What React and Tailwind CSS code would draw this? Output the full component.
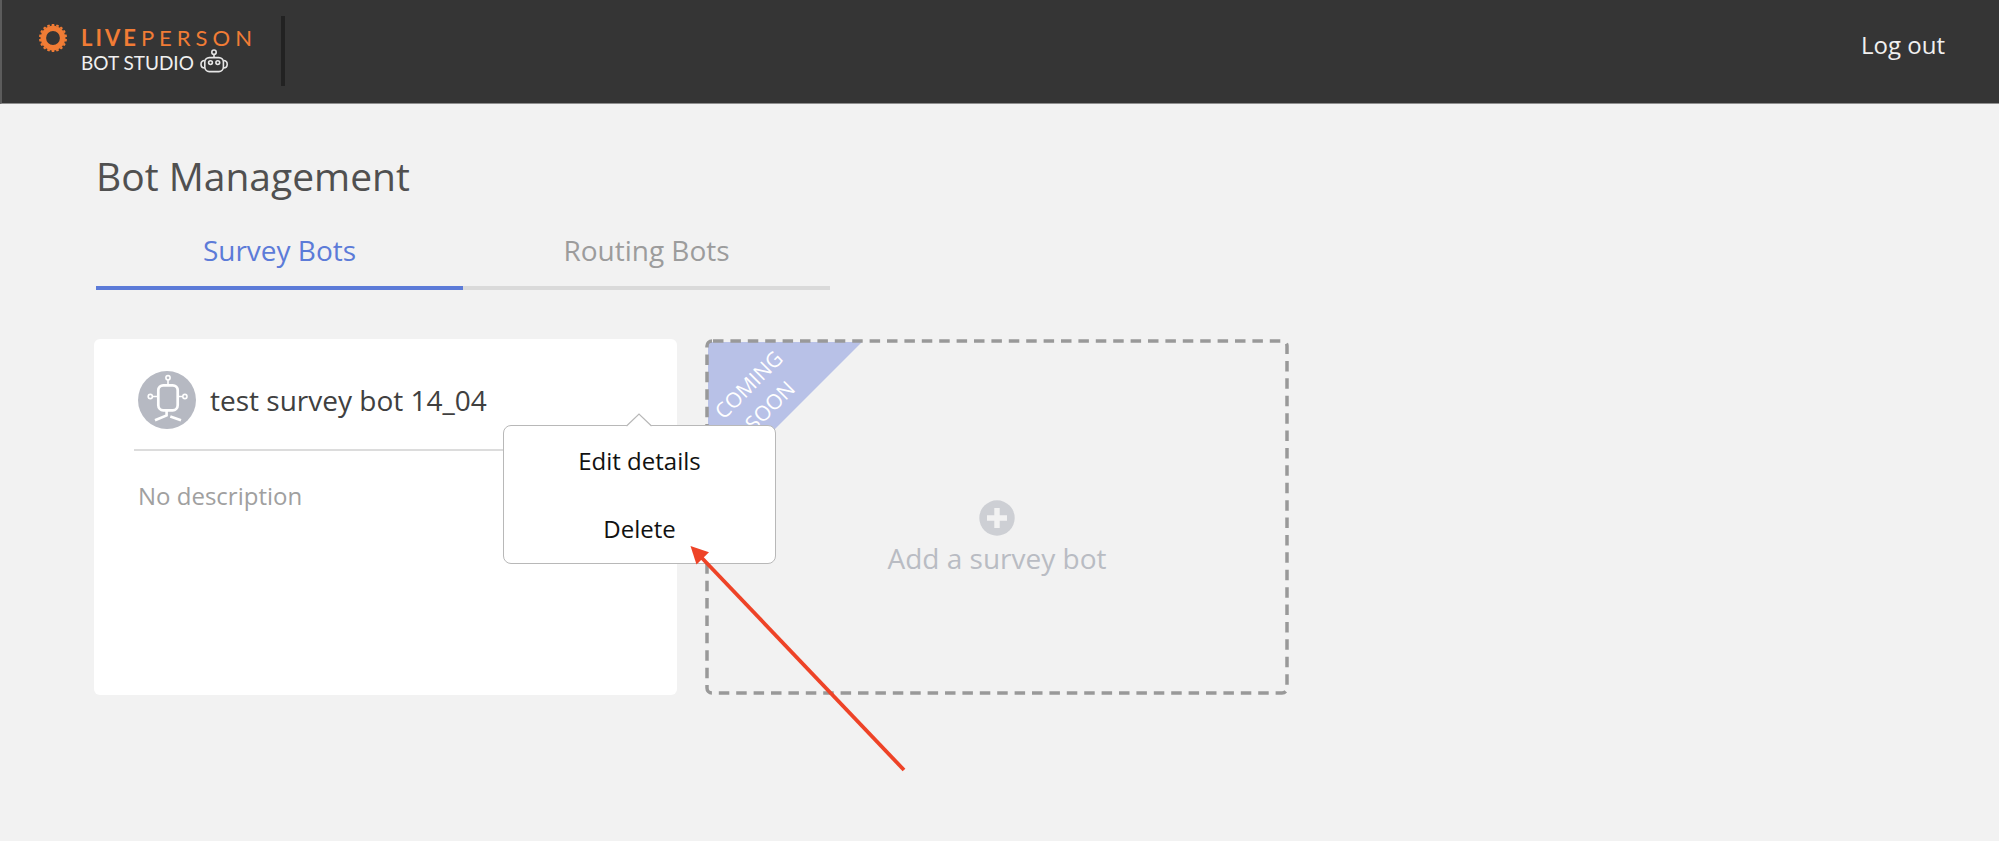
import React from "react";

function GearIcon() {
  const teeth = Array.from({ length: 18 }, (_, i) => i * 20);
  return (
    <svg viewBox="-14 -14 28 28" className="size-7" aria-hidden="true">
      <circle r="9.6" fill="none" stroke="#f17c35" strokeWidth="5.4" />
      {teeth.map((angle) => (
        <path
          key={angle}
          d="M-1.5 -12L-1.2 -14H1.2L1.5 -12Z"
          fill="#f17c35"
          transform={`rotate(${angle})`}
        />
      ))}
    </svg>
  );
}

function RobotHeadIcon() {
  return (
    <svg viewBox="0 0 28 24" className="h-6 w-7" fill="none" stroke="#e6e6e6" strokeWidth="1.6" aria-hidden="true">
      <circle cx="14" cy="3.2" r="2.2" />
      <path d="M14 5.4V8.6" />
      <rect x="4.8" y="8.6" width="18.6" height="14" rx="4.5" />
      <circle cx="10.5" cy="13.6" r="1.9" />
      <circle cx="17.8" cy="13.6" r="1.9" />
      <path d="M4.8 11.5C2.6 11.5 1 13 1 15.2S2.6 18.9 4.8 18.9M23.4 11.5C25.6 11.5 27.2 13 27.2 15.2S25.6 18.9 23.4 18.9" />
    </svg>
  );
}

function BotAvatar() {
  return (
    <svg viewBox="0 0 58 58" className="size-[58px] shrink-0" fill="none" stroke="#fff" aria-hidden="true">
      <circle cx="29" cy="29" r="29" fill="#b6b9c2" stroke="none" />
      <circle cx="30" cy="6.7" r="2.1" strokeWidth="1.6" />
      <path d="M30 8.8V14" strokeWidth="1.6" />
      <rect x="20.3" y="14.3" width="19.4" height="25" rx="5" strokeWidth="2.7" />
      <circle cx="12.3" cy="25.5" r="2.1" strokeWidth="1.6" />
      <circle cx="46.9" cy="25.5" r="2.1" strokeWidth="1.6" />
      <path d="M14.4 25.5H19M41 25.5H44.8" strokeWidth="1.6" />
      <path d="M28.6 40V44.5L17 49.3M32.3 45.5L43 49.3" strokeWidth="2.6" />
    </svg>
  );
}

function PlusIcon() {
  return (
    <svg viewBox="0 0 36 36" className="size-9" aria-hidden="true">
      <circle cx="18" cy="18" r="17.7" fill="#cdcfd4" />
      <path d="M15.3 8H20.7V15.3H28V20.7H20.7V28H15.3V20.7H8V15.3H15.3Z" fill="#f2f2f2" />
    </svg>
  );
}

function Header() {
  return (
    <header className="flex h-[104px] items-start justify-between border-b border-l-2 border-b-[#8f8f8f] border-l-[#5c5c5c] bg-[#353535]">
      <div className="mt-4 flex h-[70px] border-r-4 border-[#222] pl-[37px] pr-6">
        <div className="mt-2">
          <GearIcon />
        </div>
        <div className="ml-3.5 mt-3 font-['Lato',sans-serif]">
          <div className="text-[22px] leading-5 text-[#f17c35]">
            <span className="font-bold tracking-[3px]">LIVE</span>
            <span className="ml-0.5 tracking-[5px]">PERSON</span>
          </div>
          <div className="mt-px flex items-start gap-1.5">
            <span className="pt-1 text-[19px] leading-5 text-[#f0f0f0]">BOT STUDIO</span>
            <RobotHeadIcon />
          </div>
        </div>
      </div>
      <a href="#logout" className="mr-[54px] mt-[27px] text-2xl leading-9 text-[#f0f0f0]">
        Log out
      </a>
    </header>
  );
}

function ActionMenu() {
  return (
    <div className="absolute left-[409px] top-[86px] z-10 w-[273px]" role="menu">
      <div className="flex flex-col rounded-lg border border-[#b8b8b8] bg-white pt-px">
        <button type="button" role="menuitem" className="h-[68px] text-2xl text-[#111]">
          Edit details
        </button>
        <button type="button" role="menuitem" className="h-[68px] text-2xl text-[#111]">
          Delete
        </button>
      </div>
      <svg viewBox="0 0 26 15" className="absolute -top-3 left-[123px] h-[15px] w-[26px]" aria-hidden="true">
        <path d="M0.5 13L13 1L25.5 13V15H0.5Z" fill="#fff" />
        <path d="M0.5 13L13 1L25.5 13" fill="none" stroke="#b8b8b8" strokeWidth="1.2" />
      </svg>
      <svg viewBox="0 0 220 230" className="pointer-events-none absolute left-[186px] top-[119px] h-[230px] w-[220px]" aria-hidden="true">
        <path d="M12 13L215 226" stroke="#ee4327" strokeWidth="3.8" />
        <path d="M1.5 2L20 8.3L7.5 20.5Z" fill="#ee4327" />
      </svg>
    </div>
  );
}

function BotCard() {
  return (
    <article className="relative h-[356px] w-[583px] rounded-md bg-white">
      <div className="mx-10 flex h-[112px] items-center gap-3.5 border-b-2 border-[#dcdcdc] pl-1 pt-3">
        <BotAvatar />
        <h2 className="text-[28px] leading-9 text-[#404040]">test survey bot 14_04</h2>
      </div>
      <p className="ml-11 mt-[27px] text-2xl leading-9 text-[#a0a0a0]">No description</p>
      <ActionMenu />
    </article>
  );
}

function AddBotCard() {
  return (
    <div className="relative h-[356px] w-[584px]">
      <svg className="absolute inset-0 size-full" aria-hidden="true">
        <path d="M3 3H157L3 157Z" fill="#b8c1e7" />
        <rect x="2" y="2" width="580" height="352" rx="5" fill="none" stroke="#999" strokeWidth="3.5" strokeDasharray="10.5 6.9" strokeDashoffset="-1" />
      </svg>
      <div className="absolute left-0.5 top-1 flex size-[104px] -rotate-45 items-center justify-center text-center text-[21px] font-medium leading-[30px] text-white">
        COMING
        <br />
        SOON
      </div>
      <button type="button" className="flex size-full flex-col items-center justify-center pt-[46px] text-[28px] leading-[44px] text-[#b9bcc3]">
        <PlusIcon />
        Add a survey bot
      </button>
    </div>
  );
}

export default function App() {
  return (
    <div className="min-h-screen bg-[#f2f2f2] font-['Open_Sans',sans-serif]">
      <Header />
      <main className="px-24 pb-12 pt-11">
        <h1 className="text-[39px] leading-[56px] text-[#505050]">Bot Management</h1>
        <nav className="mt-5 grid w-[734px] max-w-full grid-cols-2 text-center text-[28px] leading-[52px]">
          <button type="button" className="h-[66px] border-b-4 border-[#5c7bd8] pb-2.5 text-[#5c7bd8]">
            Survey Bots
          </button>
          <button type="button" className="h-[66px] border-b-4 border-[#dadada] pb-2.5 text-[#9c9c9c]">
            Routing Bots
          </button>
        </nav>
        <section className="-ml-0.5 mt-[49px] flex flex-wrap gap-7">
          <BotCard />
          <AddBotCard />
        </section>
      </main>
    </div>
  );
}
